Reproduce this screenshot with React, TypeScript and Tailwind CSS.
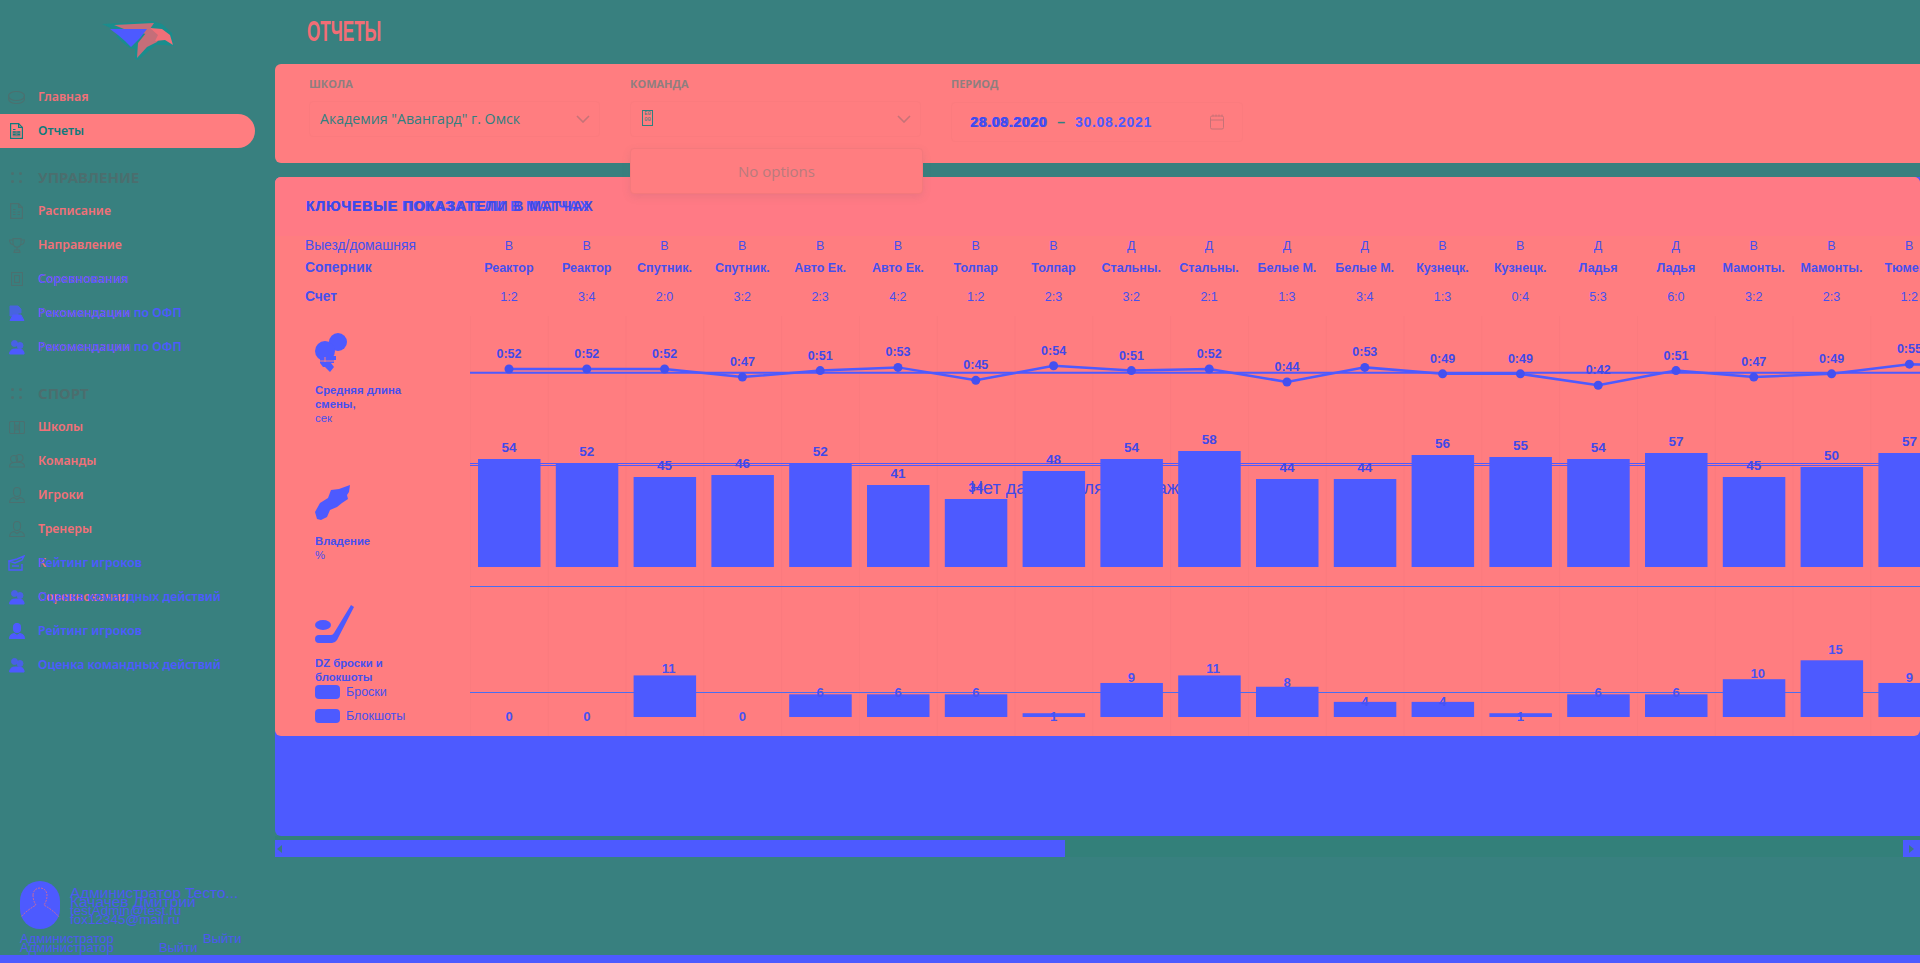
import React from 'react';

const BLUE = '#4d5aff';
const LABEL = '#3f49ea';

type Game = [string, string, string, number, number, number];
const games: Game[] = [
  ['В', 'Реактор', '1:2', 52, 54, 0],
  ['В', 'Реактор', '3:4', 52, 52, 0],
  ['В', 'Спутник.', '2:0', 52, 45, 11],
  ['В', 'Спутник.', '3:2', 47, 46, 0],
  ['В', 'Авто Ек.', '2:3', 51, 52, 6],
  ['В', 'Авто Ек.', '4:2', 53, 41, 6],
  ['В', 'Толпар', '1:2', 45, 34, 6],
  ['В', 'Толпар', '2:3', 54, 48, 1],
  ['Д', 'Стальны.', '3:2', 51, 54, 9],
  ['Д', 'Стальны.', '2:1', 52, 58, 11],
  ['Д', 'Белые М.', '1:3', 44, 44, 8],
  ['Д', 'Белые М.', '3:4', 53, 44, 4],
  ['В', 'Кузнецк.', '1:3', 49, 56, 4],
  ['В', 'Кузнецк.', '0:4', 49, 55, 1],
  ['Д', 'Ладья', '5:3', 42, 54, 6],
  ['Д', 'Ладья', '6:0', 51, 57, 6],
  ['В', 'Мамонты.', '3:2', 47, 45, 10],
  ['В', 'Мамонты.', '2:3', 49, 50, 15],
  ['В', 'Тюмень', '1:2', 55, 57, 9],
];

const cx = (i: number) => 39 + 77.8 * i;

function Puck({ c }: { c: string }) {
  return (
    <svg width="17" height="13" viewBox="0 0 17 13" fill="none" stroke={c} strokeWidth="1.200">
      <ellipse cx="8.5" cy="5" rx="8" ry="4.5" />
      <path d="M.5 5v3c0 2.500 3.600 4.500 8 4.500s8-2 8-4.500V5" />
    </svg>
  );
}
function Doc({ c, fill }: { c: string; fill?: boolean }) {
  return (
    <svg width="13" height="16" viewBox="0 0 13 16" fill="none" stroke={c} strokeWidth="1.200">
      <path d="M.6.6h8l3.800 3.800v11H.6z" />
      <path d="M8.600.6v3.800h3.800M3 6.500h2.500M3 9h2.500M3 11.500h2.500M7.500 9H10M7.500 11.500H10" />
      {fill && <rect x="2.500" y="8" width="8" height="5.500" fill={c} opacity=".6" stroke="none" />}
    </svg>
  );
}
function Dots({ c }: { c: string }) {
  return (
    <svg width="11" height="11" viewBox="0 0 11 11" fill={c}>
      <circle cx="1.500" cy="1.500" r="1.500" />
      <circle cx="9.500" cy="1.500" r="1.500" />
      <circle cx="1.500" cy="9.500" r="1.500" />
      <circle cx="9.500" cy="9.500" r="1.500" />
    </svg>
  );
}
function Trophy({ c }: { c: string }) {
  return (
    <svg width="16" height="15" viewBox="0 0 16 15" fill="none" stroke={c} strokeWidth="1.100">
      <path d="M4 .6h8v4.500c0 2.500-1.800 4-4 4s-4-1.500-4-4zM4 2H.6c0 3 1.400 4.500 3.900 5M12 2h3.400c0 3-1.400 4.500-3.900 5M8 9v3M5 14.400h6l-.6-2.400H5.600z" />
    </svg>
  );
}
function Sheet({ c }: { c: string }) {
  return (
    <svg width="12" height="14" viewBox="0 0 12 14" fill="none" stroke={c} strokeWidth="1.100">
      <rect x=".5" y=".5" width="11" height="13" />
      <rect x="3.500" y="3.500" width="5" height="7" />
    </svg>
  );
}
function Rink({ c }: { c: string }) {
  return (
    <svg width="16" height="13" viewBox="0 0 16 13" fill="none" stroke={c} strokeWidth="1.100">
      <rect x=".5" y=".5" width="15" height="12" rx="1.500" />
      <path d="M5.500.5v12M10.500.5v12M5.500 4h1.500v5H5.500M10.500 4H9v5h1.500" />
    </svg>
  );
}
function Team({ c }: { c: string }) {
  return (
    <svg width="16" height="14" viewBox="0 0 16 14" fill="none" stroke={c} strokeWidth="1.100">
      <circle cx="5" cy="5" r="3.500" />
      <circle cx="10.500" cy="4" r="3.500" />
      <path d="M.5 13c0-3 2-4.500 5-4.500h5c3 0 5 1.500 5 4.500z" />
    </svg>
  );
}
function Person({ c, fill }: { c: string; fill?: boolean }) {
  return (
    <svg width="16" height="16" viewBox="0 0 16 16" fill={fill ? c : 'none'} stroke={c} strokeWidth="1.100">
      <path d="M4.500 4c0-2 1.500-3.500 3.500-3.500S11.500 2 11.500 4v2c0 2-1.500 3.500-3.500 3.500S4.500 8 4.500 6z" />
      <path d="M.6 15.500c0-3 2-4.500 4.500-5l2.900 2 2.900-2c2.500.5 4.500 2 4.500 5z" />
    </svg>
  );
}
function Chart({ c }: { c: string }) {
  return (
    <svg width="16" height="16" viewBox="0 0 16 16" fill={c} stroke={c} strokeWidth="1">
      <path d="M1 1h8l3 3v4H9v3H1z" opacity=".75" />
      <path d="M1 15.500h14L12 10H4z" />
    </svg>
  );
}
function Team2({ c }: { c: string }) {
  return (
    <svg width="16" height="16" viewBox="0 0 16 16" fill={c} stroke={c} strokeWidth="1">
      <circle cx="5.500" cy="4.500" r="3" opacity=".8" />
      <circle cx="11" cy="6.500" r="3" opacity=".8" />
      <path d="M.6 15c0-3 2-5 5-5h5c3 0 4.500 2 4.500 5z" />
    </svg>
  );
}
function Fan({ c }: { c: string }) {
  return (
    <svg width="17" height="16" viewBox="0 0 17 16" fill="none" stroke={c} strokeWidth="1.400">
      <path d="M1 6l8-2 7-3-2 4-7 3zM1 6v9h13V9" />
      <path d="M4 11h7" />
    </svg>
  );
}

const MUTED = '#4b7070';
const NAVBLUE = '#4d5aff';

function Item({
  icon,
  text,
  under,
  blue,
  active,
}: {
  icon: React.ReactNode;
  text: string;
  under?: string;
  blue?: boolean;
  active?: boolean;
}) {
  return (
    <div
      className={
        'flex h-[34px] items-center w-[255px] rounded-r-[17px] ' +
        (active ? 'bg-[#ff7d80] text-[#0f7b7c]' : blue ? 'text-[#4d5aff]' : 'text-[#f27078]')
      }
    >
      <span className="flex w-[38px] justify-center pr-[5px] shrink-0">{icon}</span>
      <span className="relative text-[12.3px] font-semibold whitespace-nowrap">
        {under && <span className="absolute left-0 top-0 text-[#f27078]">{under}</span>}
        <span className="relative">{text}</span>
      </span>
    </div>
  );
}

function Group({ text }: { text: string }) {
  return (
    <div className="flex h-[34px] items-center mt-[12px]">
      <span className="flex w-[38px] justify-center pr-[5px] shrink-0">
        <Dots c={MUTED} />
      </span>
      <span className="text-[15px] font-bold text-[#4b6e6e]">{text}</span>
    </div>
  );
}

function Logo() {
  return (
    <svg width="72" height="39" viewBox="0 0 72 39">
      <path d="M0 3 L20 2 L50 0 L60 3 L70 12 L72 25 L62 24 L54 24 L42 34 L36 39 L33 38 L33 28 L28 27 L20 21 L14 15 L19 12 Z" fill="#1a8d8d" />
      <path d="M12 4 L52 2 L48 8 L44 13 L30 10 L22 8 Z" fill="#c56e79" />
      <path d="M8 8 L45 8 L38 17 L29 26 L23 20 L16 14 Z" fill="#4d5aff" />
      <path d="M35 37 L36 22 L48 7 L61 12 L55 21 L45 26 Z" fill="#c56e79" />
      <path d="M48 7 L60 8 L68 14 L71 24 L63 19 L53 20 L56 14 Z" fill="#f06f78" />
    </svg>
  );
}

function Sidebar() {
  return (
    <aside className="w-[275px] shrink-0 flex flex-col h-[955px]">
      <div className="h-[80px] flex pl-[102px] pt-[21px]">
        <Logo />
      </div>
      <nav className="flex flex-col">
        <Item icon={<Puck c={MUTED} />} text="Главная" />
        <Item icon={<Doc c="#0f7b7c" fill />} text="Отчеты" active />
        <Group text="УПРАВЛЕНИЕ" />
        <Item icon={<Doc c={MUTED} />} text="Расписание" />
        <Item icon={<Trophy c={MUTED} />} text="Направление" />
        <Item icon={<Sheet c={MUTED} />} text="Соревнования" under="Соревнования" blue />
        <Item icon={<Chart c={NAVBLUE} />} text="Рекомендации по ОФП" under="Рекомендации" blue />
        <Item icon={<Team2 c={NAVBLUE} />} text="Рекомендации по ОФП" under="Рекомендации" blue />
        <Group text="СПОРТ" />
        <Item icon={<Rink c={MUTED} />} text="Школы" />
        <Item icon={<Team c={MUTED} />} text="Команды" />
        <Item icon={<Person c={MUTED} />} text="Игроки" />
        <Item icon={<Person c={MUTED} />} text="Тренеры" />
        <Item icon={<Fan c={NAVBLUE} />} text="Рейтинг игроков" under="К" blue />
        <Item icon={<Team2 c={NAVBLUE} />} text="Оценка командных действий" under="Соревнования" blue />
        <Item icon={<Person c={NAVBLUE} fill />} text="Рейтинг игроков" blue />
        <Item icon={<Team2 c={NAVBLUE} />} text="Оценка командных действий" blue />
      </nav>
      <div className="mt-auto pl-[20px] pb-[3px] text-[#4d58f2] font-['Liberation_Sans',sans-serif]">
        <div className="flex">
          <div className="w-[40px] h-[48px] rounded-[20px] bg-[#4d5aff] flex items-center justify-center shrink-0">
            <svg width="40" height="36" viewBox="0 0 40 36" fill="none" stroke="#f27078" strokeWidth=".7">
              <path d="M13 8c0-4 3-7 7-7s7 3 7 7-1 7-3 10c5 3 11 7 15 12M13 8c0 4 1 7 3 10-5 3-11 7-15 12" strokeDasharray="2 1" />
            </svg>
          </div>
          <div className="pl-[10px] pt-[7px] leading-[9px] whitespace-nowrap">
            <div className="text-[15.4px]">Администратор Тесто...</div>
            <div className="text-[15.5px]">Качачев Дмитрий</div>
            <div className="text-[13.5px]">testAdmin@test.ru</div>
            <div className="text-[13.5px]">fox12345@mail.ru</div>
          </div>
        </div>
        <div className="relative h-[18px] mt-[5px] text-[13px] leading-[9px] whitespace-nowrap">
          <div>Администратор</div>
          <div>Администратор</div>
          <span className="absolute left-[183px] top-0">Выйти</span>
          <span className="absolute left-[139px] top-[9px]">Выйти</span>
        </div>
      </div>
    </aside>
  );
}

function Chevron() {
  return (
    <svg width="14" height="8" viewBox="0 0 14 8" fill="none" stroke="#c67277" strokeWidth="1.600">
      <path d="M1 1l6 6 6-6" />
    </svg>
  );
}

function Filters() {
  return (
    <section className="relative h-[99px] rounded-l-[6px] bg-[#ff7d80] pl-[34px] pt-[13px] flex gap-[29px] font-['Open_Sans',sans-serif]">
      <div className="w-[292px]">
        <div className="text-[11px] leading-[13px] font-bold text-[#8e7f7f] mb-[11px]">ШКОЛА</div>
        <div className="h-[36px] w-[291px] rounded-[4px] border border-[#fb7b7e] flex items-center justify-between pl-[10px] pr-[9px]">
          <span className="text-[14.2px] text-[#2f8080]">Академия "Авангард" г. Омск</span>
          <Chevron />
        </div>
      </div>
      <div className="w-[292px]">
        <div className="text-[11px] leading-[13px] font-bold text-[#8e7f7f] mb-[11px]">КОМАНДА</div>
        <div className="h-[36px] w-[291px] rounded-[4px] border border-[#fb7b7e] flex items-center justify-between pl-[11px] pr-[9px]">
          <span className="w-[11px] h-[16px] border border-[#2f8080] text-[5.5px] leading-[6.500px] text-center text-[#2f8080] font-['Liberation_Mono',monospace] mb-[3px]">
            E0
            <br />
            00
          </span>
          <Chevron />
        </div>
      </div>
      <div className="w-[292px]">
        <div className="text-[11px] leading-[13px] font-bold text-[#8e7f7f] mb-[12px]">ПЕРИОД</div>
        <div className="h-[40px] rounded-[4px] border border-[#fb7b7e] flex items-center justify-between pl-[19px] pr-[18px]">
          <span className="relative text-[14px] font-semibold text-[#4d5aff] whitespace-nowrap tracking-[0.7px] font-['Liberation_Sans',sans-serif]">
            <span className="absolute left-[-1px] top-0 text-[#3f49ea]">28.08.2020</span>
            28.09.2020 <span className="text-[#2f8080]">&nbsp;–&nbsp;</span> 30.08.2021
          </span>
          <svg width="14" height="16" viewBox="0 0 14 16" fill="none" stroke="#c67277" strokeWidth="1">
            <rect x=".5" y="2" width="13" height="13" rx="1.500" />
            <path d="M.5 6h13M3 .5v2M6 .5v2M9 .5v2M12 .5v2" />
          </svg>
        </div>
      </div>
      <div className="absolute left-[355px] top-[84px] w-[293px] h-[46px] pt-[1px] rounded-[4px] bg-[#ff7d80] border border-[#f4797c] shadow-[0_3px_8px_rgba(90,90,110,0.12)] flex items-center justify-center text-[15px] text-[#b87b7d] z-10">
        No options
      </div>
    </section>
  );
}

function Grid({ h }: { h: number }) {
  return (
    <>
      {games.map((_, i) => (
        <line key={i} x1={77.8 * i + 0.5} x2={77.8 * i + 0.5} y1="0" y2={h} stroke="#fb7b7e" />
      ))}
    </>
  );
}

function Row1Chart() {
  const base = 56.7;
  const py = (v: number) => 53 + (52 - v) * 1.62;
  const pts = games.map((g, i) => `${cx(i)},${py(g[3])}`);
  pts.push(`1480,${py(54)}`);
  return (
    <svg className="block shrink-0" width="1450" height="114" viewBox="0 0 1450 114">
      <Grid h={114} />
      <line x1="0" x2="1450" y1={base} y2={base} stroke={BLUE} strokeWidth="2" />
      <polyline points={pts.join(' ')} fill="none" stroke={BLUE} strokeWidth="2.500" />
      {games.map((g, i) => (
        <g key={i}>
          <circle cx={cx(i)} cy={py(g[3])} r="4.500" fill="#4450f0" />
          <text x={cx(i)} y={py(g[3]) - 11} textAnchor="middle" fontSize="12.5" fontWeight="700" fill={LABEL} fontFamily="Liberation Sans, sans-serif">
            0:{g[3]}
          </text>
        </g>
      ))}
    </svg>
  );
}

function Row2Chart() {
  return (
    <svg className="block shrink-0" width="1450" height="160" viewBox="0 0 1450 160">
      <Grid h={160} />
      <text x="500" y="64" fontSize="18" fill={LABEL} fontFamily="Liberation Sans, sans-serif">
        Нет данных для отображения
      </text>
      <line x1="0" x2="1450" y1="33.500" y2="33.500" stroke={BLUE} />
      <line x1="0" x2="1450" y1="35.500" y2="35.500" stroke={BLUE} />
      <line x1="0" x2="1450" y1="156.500" y2="156.500" stroke="#4a6df0" />
      {games.map((g, i) => {
        const h = g[4] * 2;
        return (
          <g key={i}>
            <rect x={cx(i) - 31} y={137 - h} width="62.500" height={h} fill={BLUE} />
            <text x={cx(i)} y={137 - h - 7} textAnchor="middle" fontSize="13.5" fontWeight="700" fill={LABEL} fontFamily="Liberation Sans, sans-serif">
              {g[4]}
            </text>
          </g>
        );
      })}
    </svg>
  );
}

function Row3Chart() {
  return (
    <svg className="block shrink-0" width="1450" height="146" viewBox="0 0 1450 146">
      <Grid h={146} />
      <line x1="0" x2="1450" y1="102.500" y2="102.500" stroke="#4a6df0" />
      {games.map((g, i) => {
        const v = g[5];
        const h = v * 3.78;
        const top = 127 - h;
        const center = v === 0 ? 126 : top - (v - 4);
        return (
          <g key={i}>
            {v > 0 && <rect x={cx(i) - 31} y={top} width="62.500" height={h} fill={BLUE} />}
            <text
              x={cx(i) + (v >= 10 ? 4 : 0)}
              y={center + 4.5}
              textAnchor="middle"
              fontSize="13"
              fontWeight="700"
              fill="#4652f4"
              fontFamily="Liberation Sans, sans-serif"
            >
              {v}
            </text>
          </g>
        );
      })}
    </svg>
  );
}

function IconHelmets() {
  return (
    <svg width="33" height="41" viewBox="0 0 33 41" fill={BLUE}>
      <circle cx="23" cy="9" r="9" />
      <circle cx="10" cy="18" r="10" />
      <path d="M5 23h16v4h-2v3h-3l3 4-4 5-5-5H8l-3-4z" />
      <path d="M5 28h15M10 24v5" stroke="#ff7d80" strokeWidth="1" fill="none" />
    </svg>
  );
}
function IconFire() {
  return (
    <svg width="36" height="36" viewBox="0 0 36 36" fill={BLUE}>
      <path d="M0 27 L5 18 L13 13 L16 5 L24 4 L35 0 L34 7 L32 10 L33 14 L27 18 L22 22 L15 25 L12 32 L6 35 L2 34Z" />
    </svg>
  );
}
function IconStick() {
  return (
    <svg width="40" height="40" viewBox="0 0 40 40" fill={BLUE}>
      <ellipse cx="8" cy="20" rx="8" ry="5" />
      <path d="M36 0 L39 2 L22 35 Q20 38 17 38 L4 38 Q0 38 0 34 Q0 30 4 30 L16 30 Q18 30 19 28Z" />
    </svg>
  );
}

function Report() {
  const cell = 'w-[77.8px] shrink-0 text-center whitespace-nowrap';
  return (
    <div className="mt-[14px] h-[659px] rounded-l-[6px] bg-[#4d5aff]">
      <section className="h-[559px] rounded-[6px] bg-[#ff7d80] overflow-hidden text-[#4450f0] font-['Liberation_Sans',sans-serif]">
        <div className="h-[59px] flex items-center pl-[31px] bg-[#ff7a85]">
          <h2 className="relative text-[14px] font-bold text-[#4d58f8] tracking-[0.8px] whitespace-nowrap">
            <span className="absolute left-0 top-0 text-[#3f49ea] tracking-[0.95px]">КЛЮЧЕВЫЕ ПОКАЗАТЕЛИ В МАТЧАХ</span>
            КЛЮЧЕВЫЕ ПОКАЗАТЕЛИ В МАТЧАХ
          </h2>
        </div>
        <div className="flex h-[21px] items-center text-[12.5px]">
          <div className="w-[195px] pl-[30px] shrink-0 text-[13.8px]">Выезд/домашняя</div>
          {games.map((g, i) => (
            <div key={i} className={cell}>
              {g[0]}
            </div>
          ))}
        </div>
        <div className="flex h-[22px] items-center text-[12.5px] font-bold">
          <div className="w-[195px] pl-[30px] shrink-0 text-[13.8px]">Соперник</div>
          {games.map((g, i) => (
            <div key={i} className={cell}>
              {g[1]}
            </div>
          ))}
        </div>
        <div className="flex h-[37px] items-center text-[12.500px]">
          <div className="w-[195px] pl-[30px] shrink-0 text-[13.8px] font-bold">Счет</div>
          {games.map((g, i) => (
            <div key={i} className={cell}>
              {g[2]}
            </div>
          ))}
        </div>

        <div className="flex h-[114px]">
          <div className="w-[195px] shrink-0 pl-[40px] pt-[17px] text-[11.3px] leading-[14px]">
            <IconHelmets />
            <div className="mt-[9px] font-bold">
              Средняя длина
              <br />
              смены,
            </div>
            <div>сек</div>
          </div>
          <Row1Chart />
        </div>
        <div className="flex h-[160px]">
          <div className="w-[195px] shrink-0 pl-[40px] pt-[55px] text-[11.3px] leading-[14px]">
            <IconFire />
            <div className="mt-[13px] font-bold">Владение</div>
            <div>%</div>
          </div>
          <Row2Chart />
        </div>
        <div className="flex h-[146px]">
          <div className="w-[195px] shrink-0 pl-[40px] pt-[15px] text-[11.3px] leading-[14px]">
            <IconStick />
            <div className="mt-[11px] font-bold">
              DZ броски и
              <br />
              блокшоты
            </div>
            <div className="flex items-center gap-[6px] h-[14px] mt-[1px] text-[12.5px]">
              <span className="w-[25px] h-[14px] rounded-[4px] bg-[#4d5aff]" />
              Броски
            </div>
            <div className="flex items-center gap-[6px] h-[14px] mt-[10px] text-[12.5px]">
              <span className="w-[25px] h-[14px] rounded-[4px] bg-[#4d5aff]" />
              Блокшоты
            </div>
          </div>
          <Row3Chart />
        </div>
      </section>
    </div>
  );
}

function Scrollbar() {
  return (
    <div className="h-[21px] flex pt-[4px] bg-[#33807a]">
      <div className="w-[790px] h-[17px] bg-[#4d5aff] flex items-center pl-[2px]">
        <svg width="5" height="8" viewBox="0 0 5 8" fill="#3c7a80">
          <path d="M5 0v8L0 4z" />
        </svg>
      </div>
      <div className="flex-1" />
      <div className="w-[17px] h-[17px] bg-[#4d5aff] flex items-center justify-center">
        <svg width="5" height="8" viewBox="0 0 5 8" fill="#3c7a80">
          <path d="M0 0v8l5-4z" />
        </svg>
      </div>
    </div>
  );
}

export default function App() {
  return (
    <div className="h-[963px] w-[1920px] overflow-hidden bg-[#38807f] font-['Noto_Sans',sans-serif] flex flex-col">
      <div className="flex flex-1 min-h-0">
        <Sidebar />
        <main className="flex-1 min-w-0 overflow-hidden">
          <header className="h-[64px] pl-[32px] pt-[13px]">
            <h1 className="origin-left [transform:scaleX(0.57)] text-[30px] leading-[36px] font-bold text-[#f26d75] font-['Liberation_Sans',sans-serif]">
              ОТЧЕТЫ
            </h1>
          </header>
          <Filters />
          <Report />
          <Scrollbar />
        </main>
      </div>
      <div className="h-[8px] bg-[#4d5aff]" />
    </div>
  );
}
